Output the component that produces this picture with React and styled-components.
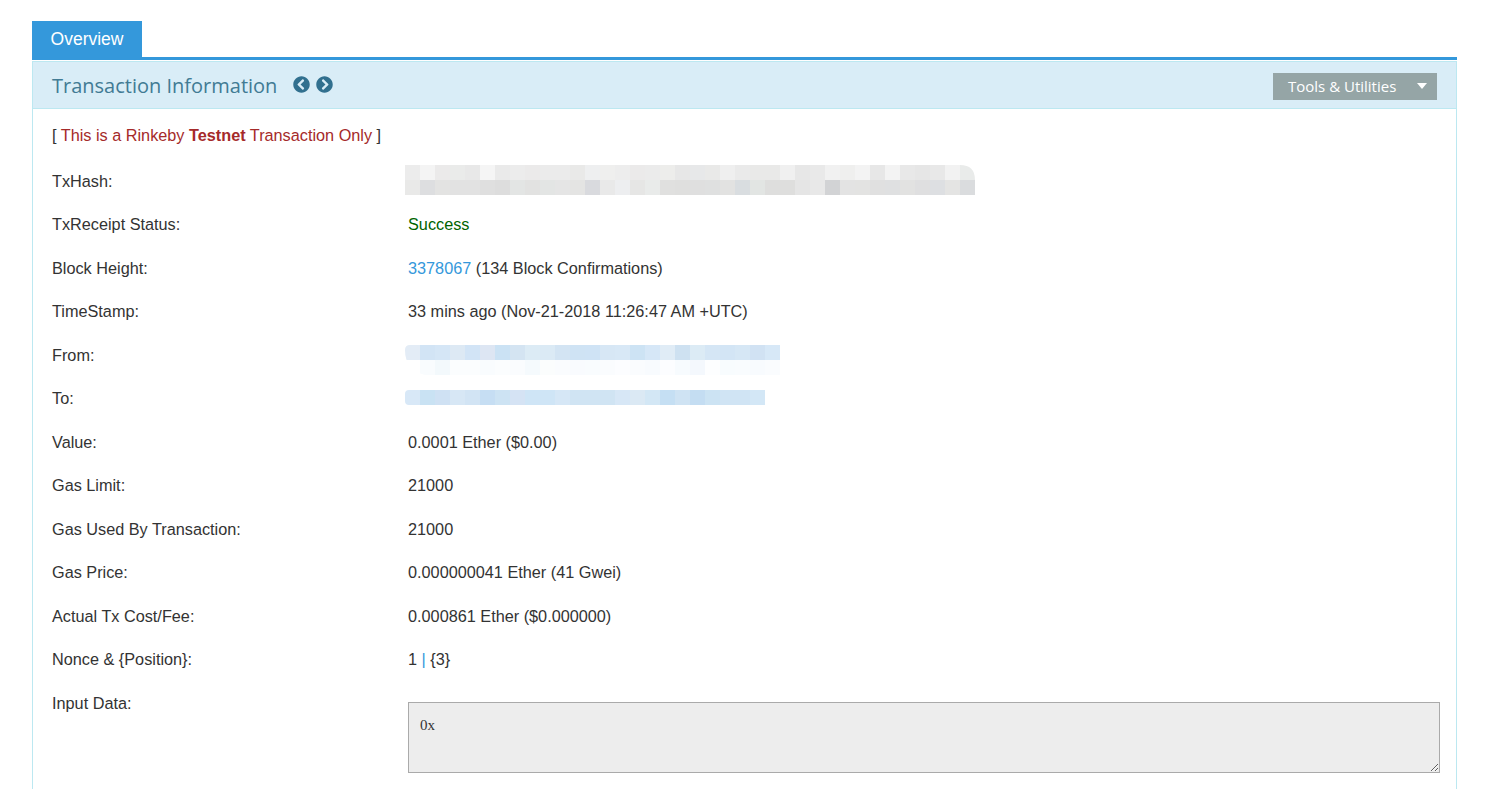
import React from "react";
import styled, { createGlobalStyle } from 'styled-components';
import { FaChevronCircleLeft, FaChevronCircleRight } from 'react-icons/fa';

const GlobalStyle = createGlobalStyle`
    html, body {
        margin: 0;
        height: 100%;
        overflow: hidden;
        background: #fff;
    }
    body {
        font-family: "Liberation Sans", Arial, sans-serif;
        font-size: 16.25px;
        color: #333;
    }
`

const Page = styled.div`
    height: 789px;
    padding: 21px 29px 0 32px;
    box-sizing: border-box;
    display: flex;
    flex-direction: column;
`

const TabBar = styled.div`
    display: flex;
    border-bottom: 3px solid #3498db;
`

const Tab = styled.div`
    width: 110px;
    height: 36px;
    line-height: 36px;
    text-align: center;
    background-color: #3498db;
    color: #fff;
    font-size: 17.5px;
`

const Panel = styled.section`
    flex: 1;
    margin-top: 1px;
    border: 1px solid #bce8f1;
    border-bottom: 0;
`

const PanelHeader = styled.header`
    height: 47px;
    box-sizing: border-box;
    display: flex;
    align-items: center;
    justify-content: space-between;
    padding: 0 19px;
    background-color: #d9edf7;
    border-bottom: 1px solid #bce8f1;
`

const TitleGroup = styled.div`
    display: flex;
    align-items: center;
`

const PanelTitle = styled.h2`
    margin: 0;
    font-family: "Open Sans", sans-serif;
    font-size: 20px;
    font-weight: 400;
    color: #417b94;
`

const Pager = styled.div`
    display: flex;
    gap: 6px;
    margin-left: 16px;
    margin-top: -1px;
    color: #31708f;
    font-size: 17px;
    line-height: 0;
`

const ToolsButton = styled.button`
    width: 164px;
    height: 27px;
    box-sizing: border-box;
    display: flex;
    align-items: center;
    justify-content: space-between;
    margin-top: 2px;
    padding: 0 10px 0 15px;
    border: 0;
    background-color: #95a5a6;
    color: #fff;
    font-family: "Open Sans", sans-serif;
    font-size: 15px;
`

const Caret = styled.span`
    width: 0;
    height: 0;
    border-left: 5px solid transparent;
    border-right: 5px solid transparent;
    border-top: 6px solid #fff;
    margin-top: -1px;
`

const PanelBody = styled.div`
    padding: 16px 19px 0;
`

const Notice = styled.p`
    margin: 0 0 21.75px;
    height: 21px;
    line-height: 21px;
    color: #333;
`

const Warn = styled.span`
    color: #a52a2a;
`

const Rows = styled.div`
    display: flex;
    flex-direction: column;
`

const Row = styled.div`
    display: grid;
    grid-template-columns: 356px 1fr;
    height: 43.5px;
    line-height: 21px;
    padding-top: 3px;
    box-sizing: border-box;
`

const Label = styled.div`
    color: #333;
`

const Value = styled.div`
    color: ${pr => pr.$color || '#333'};
`

const BlockLink = styled.a`
    color: #3498db;
    text-decoration: none;
`

const Mosaic = styled.svg`
    display: block;
    margin-left: -3px;
    margin-top: ${pr => pr.$top}px;
`

const InputRow = styled.div`
    display: grid;
    grid-template-columns: 356px 1fr;
    line-height: 21px;
    padding-top: 3px;
`

const InputData = styled.textarea`
    display: block;
    width: 1032px;
    height: 71px;
    box-sizing: border-box;
    margin: 9px 0 0;
    padding: 14px 11px;
    border: 1px solid #aaa;
    background-color: #ededed;
    color: #333;
    font-family: "Liberation Serif", serif;
    font-size: 15px;
    outline: none;
`

const hashTop = ['ececec','f4f4f4','ebeaea','eaebea','e8e8e8','f5f5f5','eaeaea','ececec','ebeaea','ebebeb','ebebeb','e9e9e8','eeeff0','efefee','ededed','ebeaea','ebebeb','ededeb','e7e7e7','e7e8e9','e9e9e8','efefef','eaeaea','e9e9e8','e9e9e8','f0f0f0','e7e7e7','e9e9e9','f1f1f1','efefee','f3f3f3','e7e7e7','f3f3f3','e8e8e8','e6e6e6','e8e8e8','f2f2f2','e9ebea']
const hashBottom = ['e9e9e8','dddee0','e3e3e2','e2e2e2','e2e2e2','dfdfdf','dddddd','e3e5e4','e2e2e1','e3e5e4','e5e5e5','e4e4e3','d9dade','e9e9e9','edeef0','e6e6e5','e9ebea','e0e0df','dfdfde','dfdfdf','dfe0e0','e2e2e1','d9dde0','e2e5e3','dededd','dededd','e5e5e5','e8e8e8','d2d3d5','e3e3e3','e3e3e2','e0e0e0','dfe0e1','e2e2e1','dfdfe0','dddfe2','e4e4e3','dadcde']
const fromTop = ['e3ecf6','d2e4f5','d5e6f6','dde9f4','d2e4f6','dde6f3','cbe2f4','d4e4f2','dcebf5','dbeaf5','d3e4f3','cfe3f4','cfe3f5','d7e7f5','d8e8f6','cde3f4','d6e7f7','e0ecf6','cee1f1','dcebf5','d5e6f5','d3e5f5','d6e7f5','d1e2f3','d7e8f7']
const fromBottom = ['ffffff','f9fcfe','f3f9fc','fbfdfe','fbfdfe','f9fcfe','fbfdfe','fafcfe','f5fafd','fbfdfd','fafcfe','f9fbfe','f9fcfe','fafcfe','fcfdff','fafcfe','f8fbfe','fcfdff','f7fbfe','f4f8fd','fdfeff','f8fcfe','f9fcfe','f8fbfe','fafcfe']
const toTop = ['d8e8f7','c9e2f3','cfe1f3','d7e7f5','d2e4f4','c6def3','cde3f3','d5e3f4','cfe5f6','cfe5f6','d6e7f6','d0e4f3','d0e4f3','d0e4f3','d7e7f6','dbe9f4','d3e7f5','c5dff3','cfe3f3','c4ddf2','cce3f3','d0e4f4','d0e4f4','d3e7f6']

// the blurred addresses are a picture, 15px blocks
function Blur({ rows, top, clip }) {
    const width = rows[0].length * 15
    return (
        <Mosaic $top={top} width={width} height={rows.length * 15}>
            <g clipPath={clip ? `url(#${clip.id})` : undefined}>
                {rows.map((cols, y) => cols.map((c, x) => (
                    <rect key={`${y}-${x}`} x={x * 15} y={y * 15} width="15" height="15" fill={`#${c}`} />
                )))}
            </g>
            {clip && (
                <clipPath id={clip.id}>
                    <path d={clip.d} />
                </clipPath>
            )}
        </Mosaic>
    )
}

function App() {
    return (
        <Page>
            <GlobalStyle />
            <TabBar>
                <Tab>Overview</Tab>
            </TabBar>
            <Panel>
                <PanelHeader>
                    <TitleGroup>
                        <PanelTitle>Transaction Information</PanelTitle>
                        <Pager>
                            <FaChevronCircleLeft />
                            <FaChevronCircleRight />
                        </Pager>
                    </TitleGroup>
                    <ToolsButton>Tools &amp; Utilities<Caret /></ToolsButton>
                </PanelHeader>
                <PanelBody>
                    <Notice>[ <Warn>This is a Rinkeby <b>Testnet</b> Transaction Only</Warn> ]</Notice>
                    <Rows>
                        <Row>
                            <Label>TxHash:</Label>
                            <Blur top={-6} rows={[hashTop, hashBottom]} clip={{ id: 'hash', d: 'M0 0H555Q570 0 570 15V30H0Z' }} />
                        </Row>
                        <Row>
                            <Label>TxReceipt Status:</Label>
                            <Value $color="#006400">Success</Value>
                        </Row>
                        <Row>
                            <Label>Block Height:</Label>
                            <Value><BlockLink href="#">3378067</BlockLink> (134 Block Confirmations)</Value>
                        </Row>
                        <Row>
                            <Label>TimeStamp:</Label>
                            <Value>33 mins ago (Nov-21-2018 11:26:47 AM +UTC)</Value>
                        </Row>
                        <Row>
                            <Label>From:</Label>
                            <Blur top={0} rows={[fromTop, fromBottom]} clip={{ id: 'from', d: 'M5 0H375V30H20Q0 25 0 5Q0 0 5 0Z' }} />
                        </Row>
                        <Row>
                            <Label>To:</Label>
                            <Blur top={2} rows={[toTop]} clip={{ id: 'to', d: 'M4 0H360V15H4Q0 15 0 11V4Q0 0 4 0Z' }} />
                        </Row>
                        <Row>
                            <Label>Value:</Label>
                            <Value>0.0001 Ether ($0.00)</Value>
                        </Row>
                        <Row>
                            <Label>Gas Limit:</Label>
                            <Value>21000</Value>
                        </Row>
                        <Row>
                            <Label>Gas Used By Transaction:</Label>
                            <Value>21000</Value>
                        </Row>
                        <Row>
                            <Label>Gas Price:</Label>
                            <Value>0.000000041 Ether (41 Gwei)</Value>
                        </Row>
                        <Row>
                            <Label>Actual Tx Cost/Fee:</Label>
                            <Value>0.000861 Ether ($0.000000)</Value>
                        </Row>
                        <Row>
                            <Label>Nonce &amp; {'{'}Position{'}'}:</Label>
                            <Value>1 <BlockLink as="span">|</BlockLink> {'{'}3{'}'}</Value>
                        </Row>
                        <InputRow>
                            <Label>Input Data:</Label>
                            <InputData readOnly defaultValue="0x" />
                        </InputRow>
                    </Rows>
                </PanelBody>
            </Panel>
        </Page>
    )
}

export default App;
